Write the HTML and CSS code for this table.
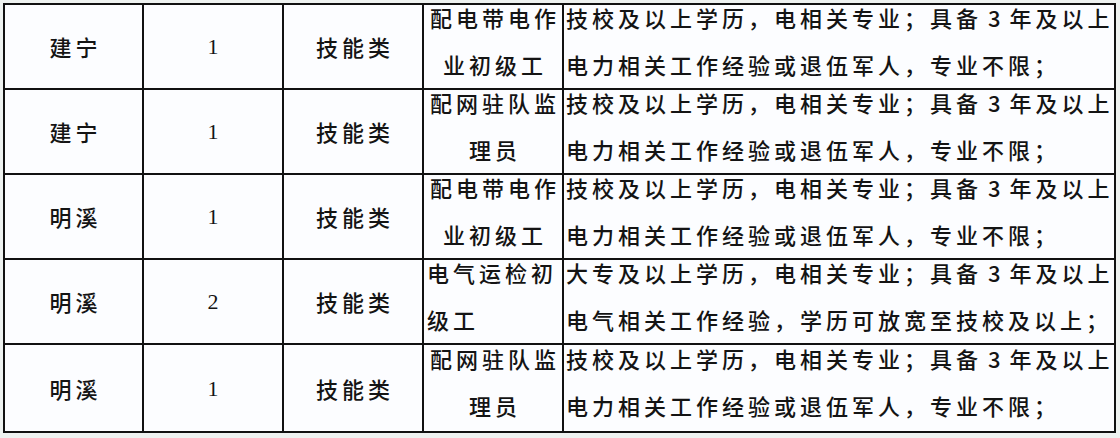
FILE: index.html
```
<!DOCTYPE html>
<html lang="zh">
<head>
<meta charset="utf-8">
<link rel="stylesheet" href="styles.css">
</head>
<body>
<div class="sheet">
  <div class="cell city">建宁</div>
  <div class="cell num">1</div>
  <div class="cell kind">技能类</div>
  <div class="cell post"><span>配电带电作</span><span>业初级工</span></div>
  <div class="cell req"><span>技校及以上学历，电相关专业；具备<b class="d">3</b>年及以上</span><span>电力相关工作经验或退伍军人，专业不限；</span></div>

  <div class="cell city">建宁</div>
  <div class="cell num">1</div>
  <div class="cell kind">技能类</div>
  <div class="cell post"><span>配网驻队监</span><span>理员</span></div>
  <div class="cell req"><span>技校及以上学历，电相关专业；具备<b class="d">3</b>年及以上</span><span>电力相关工作经验或退伍军人，专业不限；</span></div>

  <div class="cell city">明溪</div>
  <div class="cell num">1</div>
  <div class="cell kind">技能类</div>
  <div class="cell post"><span>配电带电作</span><span>业初级工</span></div>
  <div class="cell req"><span>技校及以上学历，电相关专业；具备<b class="d">3</b>年及以上</span><span>电力相关工作经验或退伍军人，专业不限；</span></div>

  <div class="cell city">明溪</div>
  <div class="cell num">2</div>
  <div class="cell kind">技能类</div>
  <div class="cell post left"><span>电气运检初</span><span>级工</span></div>
  <div class="cell req"><span>大专及以上学历，电相关专业；具备<b class="d">3</b>年及以上</span><span>电气相关工作经验，学历可放宽至技校及以上；</span></div>

  <div class="cell city">明溪</div>
  <div class="cell num">1</div>
  <div class="cell kind">技能类</div>
  <div class="cell post"><span>配网驻队监</span><span>理员</span></div>
  <div class="cell req"><span>技校及以上学历，电相关专业；具备<b class="d">3</b>年及以上</span><span>电力相关工作经验或退伍军人，专业不限；</span></div>
</div>
</body>
</html>
```
FILE: styles.css
```
html, body {
  margin: 0;
  padding: 0;
}
body {
  background: #eef2f0;
  width: 1120px;
  height: 438px;
  overflow: hidden;
  font-family: "Noto Sans CJK SC", "Noto Sans", sans-serif;
  color: #141414;
}
.sheet {
  margin: 3px 0 0 3px;
  width: 1113px;
  display: grid;
  grid-template-columns: 137px 138px 138px 138px 550px;
  grid-template-rows: 83px 83px 83px 83px 86px;
  gap: 2px;
  padding: 2px;
  box-sizing: border-box;
  background: #111;
}
.cell {
  background: #fcfdff;
  display: flex;
  flex-direction: column;
  justify-content: center;
  overflow: visible;
  font-size: 22px;
  font-weight: 500;
  line-height: 47px;
  white-space: nowrap;
  letter-spacing: 4px;
}
.city, .kind {
  align-items: center;
  padding-left: 4px;
}
.num {
  align-items: center;
  font-family: "Liberation Serif", serif;
  font-weight: 400;
  font-size: 22px;
  letter-spacing: 0;
}
.post {
  align-items: center;
  padding-left: 4px;
  padding-bottom: 12px;
}
.post.left {
  align-items: flex-start;
  padding-left: 3px;
}
.req {
  align-items: flex-start;
  padding-left: 2px;
  padding-bottom: 12px;
}
.d {
  font-weight: 500;
  margin: 0 5px 0 6px;
}
```
